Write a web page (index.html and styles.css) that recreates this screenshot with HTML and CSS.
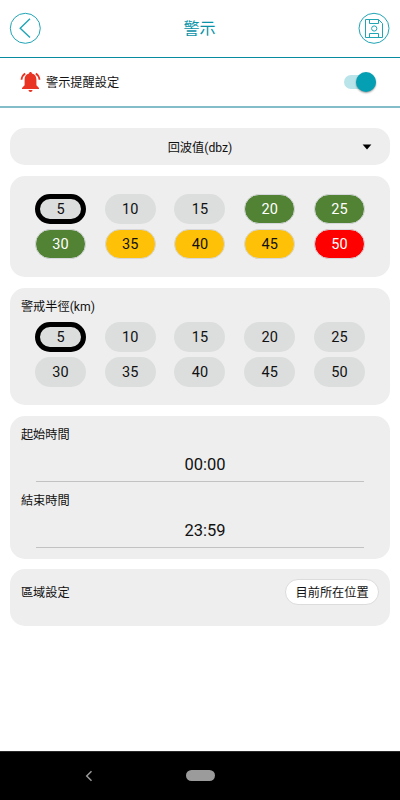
FILE: index.html
```html
<!DOCTYPE html>
<html lang="zh-Hant">
<head>
<meta charset="utf-8">
<title>警示</title>
<link rel="stylesheet" href="styles.css">
</head>
<body>
<header class="topbar">
  <svg class="round-icon" viewBox="0 0 32 32"><circle cx="16.3" cy="16.3" r="15"/><path class="chevron" d="M21 6.7 11.2 16.3 21 25.6"/></svg>
  <h1>警示</h1>
  <svg class="round-icon save" viewBox="0 0 32 32"><circle cx="16" cy="16.3" r="15"/><path d="M7.5 7.5H20.5L24.5 11.5V25.5H7.5ZM11.5 7.5V11.5H20.5V7.5M11.5 25.5V21.5H20.5V25.5"/><circle cx="16.2" cy="16.5" r="2.6"/></svg>
</header>
<section class="alert-row">
  <svg class="bell" viewBox="0 0 20 20"><path class="fill" d="M10 0C10.8 0 11.4.6 11.4 1.4 14.3 2 15.9 4.3 15.9 7.2V13.3L18.5 16V17H1.5V16L4.1 13.3V7.2C4.1 4.3 5.7 2 8.6 1.4 8.6.6 9.2 0 10 0ZM8 18H12C12 20.5 8 20.5 8 18Z"/><path class="wave" d="M4.7 1.4Q1.3 3.6 1 7.8M15.3 1.4Q18.7 3.6 19 7.8"/></svg>
  <span class="alert-label">警示提醒設定</span>
  <span class="switch"><i class="thumb"></i></span>
</section>
<main>
  <section class="card select"><span>回波值(dbz)</span><svg class="arrow" viewBox="0 0 10 6"><path d="M.6.5H9.4L5 5.6Z"/></svg></section>
  <section class="card echo">
    <div class="grid">
      <span class="pill selected">5</span><span class="pill">10</span><span class="pill">15</span><span class="pill green">20</span><span class="pill green">25</span>
      <span class="pill green">30</span><span class="pill amber">35</span><span class="pill amber">40</span><span class="pill amber">45</span><span class="pill red">50</span>
    </div>
  </section>
  <section class="card radius">
    <div class="label">警戒半徑(km)</div>
    <div class="grid">
      <span class="pill selected">5</span><span class="pill">10</span><span class="pill">15</span><span class="pill">20</span><span class="pill">25</span>
      <span class="pill">30</span><span class="pill">35</span><span class="pill">40</span><span class="pill">45</span><span class="pill">50</span>
    </div>
  </section>
  <section class="card times">
    <div class="label">起始時間</div>
    <div class="time">00:00</div>
    <div class="label">結束時間</div>
    <div class="time">23:59</div>
  </section>
  <section class="card area"><span>區域設定</span><span class="place">目前所在位置</span></section>
</main>
<nav class="navbar">
  <svg class="nav-back" viewBox="0 0 8 12"><path d="M6.5 1.2 1.7 6 6.5 10.8"/></svg>
  <i class="nav-home"></i>
</nav>
</body>
</html>
```
FILE: styles.css
```css
* { box-sizing: border-box; }
body {
  margin: 0;
  height: 800px;
  display: flex;
  flex-direction: column;
  overflow: hidden;
  background: #fff;
  color: #111;
  font: 12.2px/18px Roboto, "Noto Sans CJK TC", sans-serif;
}
svg { display: block; }
.topbar {
  height: 58px;
  padding: 0 10px 1px 9px;
  display: flex;
  align-items: center;
  justify-content: space-between;
  border-bottom: 1px solid #078ba0;
}
h1 { margin: 1px 0 0; font-size: 16px; line-height: 24px; font-weight: 400; color: #0893a8; }
.round-icon { width: 32px; height: 32px; fill: none; stroke: #20a5b5; stroke-width: 1; overflow: visible; }
.chevron { stroke-width: 1.4; }
.alert-row {
  height: 50px;
  padding: 0 24px 0 20px;
  display: flex;
  align-items: center;
  border-bottom: 2px solid #84bdca;
}
.bell { width: 21px; height: 20px; }
.fill { fill: #e93323; }
.wave { fill: none; stroke: #e93323; stroke-width: 1.8; }
.alert-label { margin: 2px 0 0 5px; }
.switch {
  width: 32px;
  height: 14px;
  margin-left: auto;
  display: flex;
  align-items: center;
  justify-content: flex-end;
  border-radius: 7px;
  background: #b9e5ea;
}
.thumb { width: 20px; height: 20px; border-radius: 50%; background: #059fb3; box-shadow: 0 1px 2px #0006; }
main {
  flex: 1;
  padding: 20px 10.4px 0;
  display: flex;
  flex-direction: column;
}
.card { flex: none; border-radius: 15px; background: #eee; }
.select {
  height: 37px;
  display: grid;
  grid-template-columns: 1fr auto 1fr;
  align-items: center;
}
.select span { grid-column: 2; padding-top: 2px; }
.arrow { width: 10px; height: 6px; justify-self: end; margin-right: 17.6px; }
.echo { height: 101px; margin-top: 11px; padding-top: 18px; }
.grid {
  margin: 0 24.6px;
  display: grid;
  grid-template-columns: repeat(5, 51px);
  justify-content: space-between;
  row-gap: 5.2px;
}
.pill {
  height: 30px;
  border-radius: 15px;
  background: #dcdddd;
  font-size: 14.5px;
  line-height: 32px;
  text-align: center;
}
.selected { border: 5px solid #000; line-height: 22px; }
.green, .amber, .red { border: 1px solid #d5d7dc; line-height: 30px; }
.green { background: #528233; color: #fff; }
.amber { background: #ffc107; }
.red { background: #f00; color: #fff; }
.label { padding-left: 10.5px; }
.radius { height: 117.5px; margin-top: 10.5px; padding-top: 10px; }
.radius .grid { margin-top: 6.5px; }
.times { height: 142.5px; margin-top: 11px; padding-top: 10px; }
.time {
  height: 38px;
  margin: 0 25.6px 10px;
  padding-left: 10px;
  border-bottom: 1px solid #c1c3c2;
  font-size: 16.5px;
  line-height: 42px;
  text-align: center;
}
.area {
  height: 56.5px;
  margin-top: 10.7px;
  padding: 10px 10.5px 0;
  display: flex;
  justify-content: space-between;
  align-items: flex-start;
}
.area > :first-child { margin-top: 5px; }
.place {
  width: 94px;
  height: 26px;
  border: 1px solid #dcdcdc;
  border-radius: 13px;
  background: #fff;
  line-height: 26px;
  text-align: center;
}
.navbar {
  height: 49px;
  padding-bottom: 1px;
  display: flex;
  align-items: center;
  background: #000;
  border-top: 1px solid #292929;
}
.nav-back { width: 8px; height: 12px; margin-left: 85px; fill: none; stroke: #999; stroke-width: 1.5; }
.nav-home { width: 29px; height: 11px; margin-left: 93px; border-radius: 6px; background: #9b9b9b; }
```
